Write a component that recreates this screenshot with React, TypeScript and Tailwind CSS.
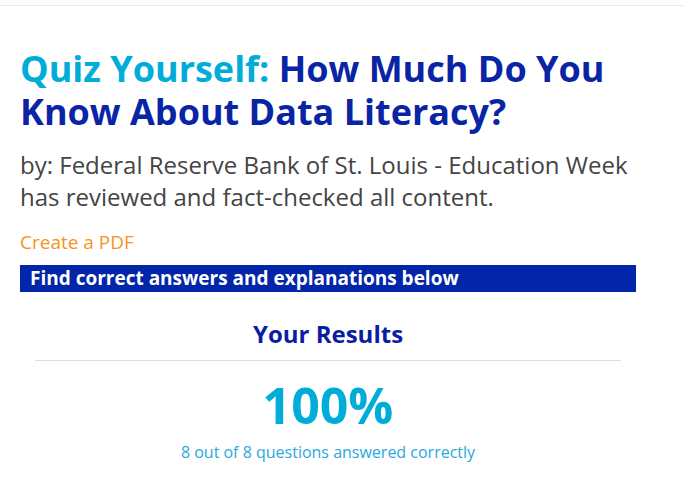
export default function App() {
  return (
    <div className="min-h-screen bg-white font-['Open_Sans',sans-serif]">
      <div className="h-[6px] border-b border-[#ececec]" />
      <div className="w-[616px] ml-5 pt-[41px]">
        <h1 className="text-[36px] leading-[43px] font-bold text-[#0a24a6]">
          <span className="text-[#00acd8]">Quiz Yourself:</span> How Much Do You Know About Data Literacy?
        </h1>
        <p className="mt-[16px] text-[24px] leading-[32px] text-[#444444]">
          by: Federal Reserve Bank of St. Louis - Education Week has reviewed and fact-checked all content.
        </p>
        <a className="block mt-[16px] text-[19px] leading-[26px] text-[#f7941d]">Create a PDF</a>
        <div className="mt-[10px] bg-[#0325a8] h-[27px] px-[10px] flex items-center text-white font-bold text-[19px]">
          Find correct answers and explanations below
        </div>
        <div className="mx-[15px] mt-[26px] flex flex-col items-center">
          <h2 className="text-[24px] leading-[32px] font-bold text-[#0a1ea0]">Your Results</h2>
          <div className="w-full mt-[10px] border-t border-[#dddddd]" />
          <div className="mt-[13px] text-[50px] leading-[62px] font-bold text-[#00acd8]">100%</div>
          <div className="mt-[6px] text-[16px] leading-[20px] text-[#29a8dc]">8 out of 8 questions answered correctly</div>
        </div>
      </div>
    </div>
  );
}
